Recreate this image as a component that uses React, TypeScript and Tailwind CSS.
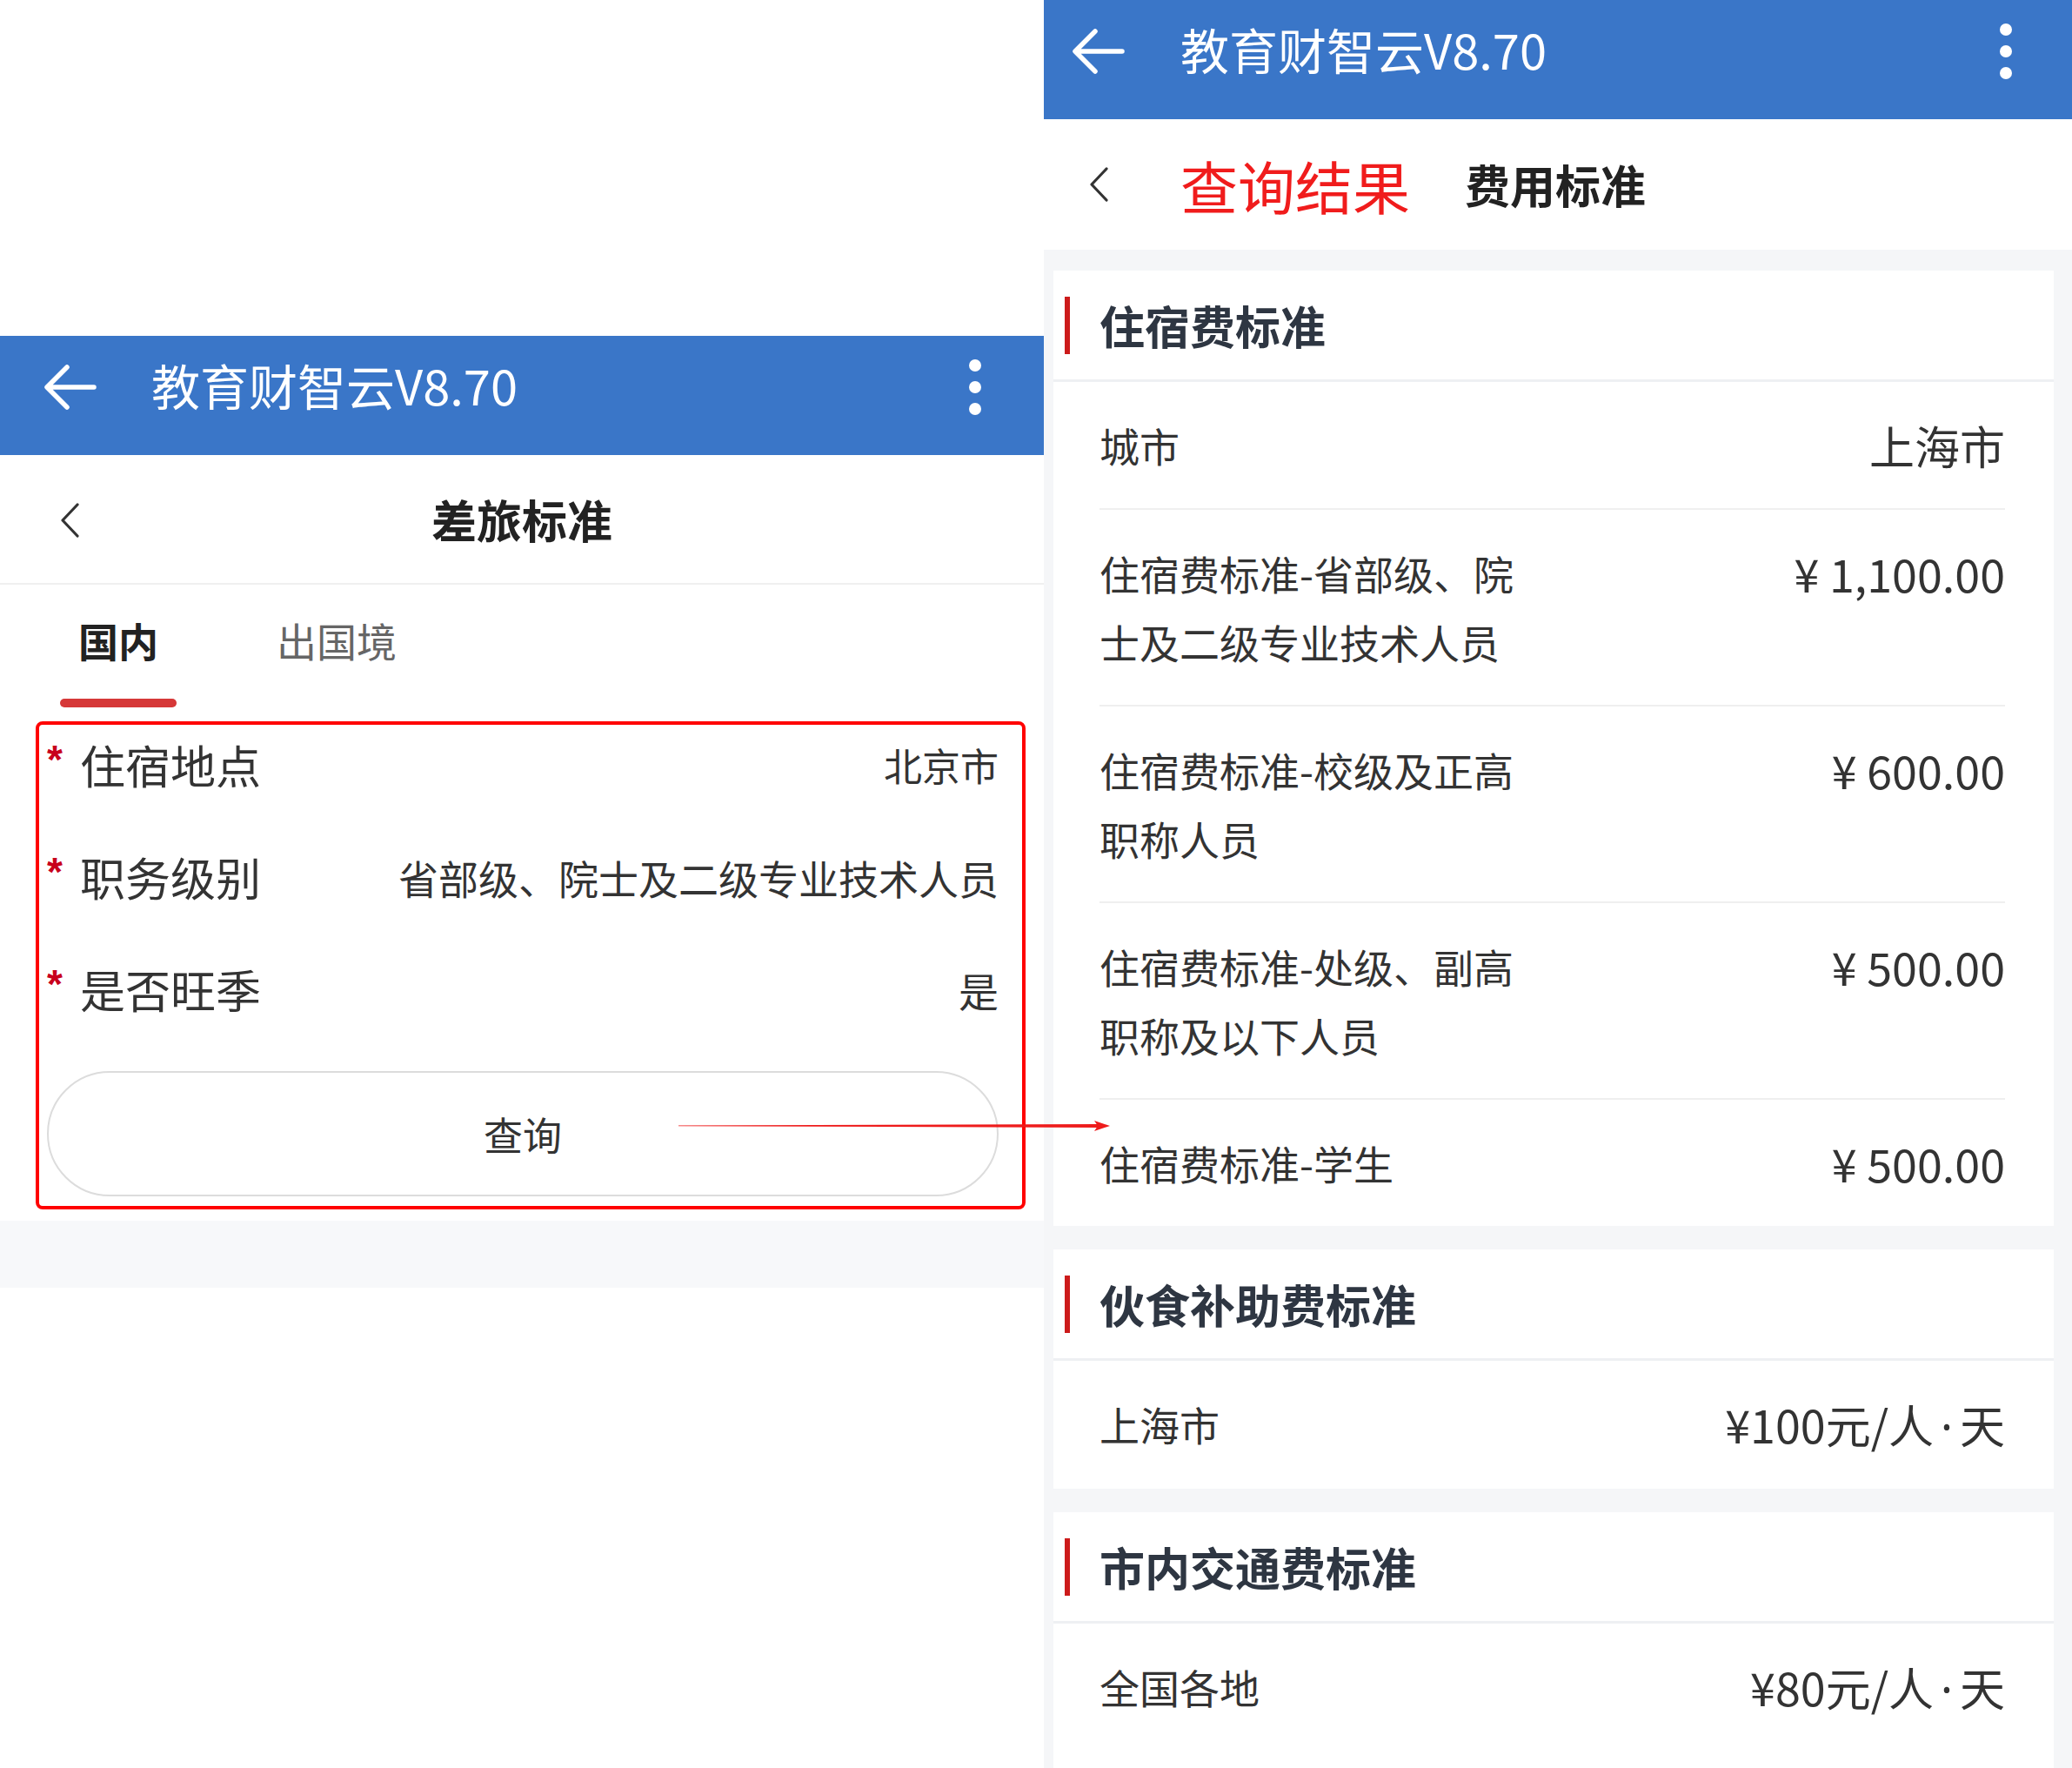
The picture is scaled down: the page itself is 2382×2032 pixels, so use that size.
import React from "react";

function BackArrow() {
  return (
    <svg width="61" height="52" viewBox="0 0 61 52" fill="none">
      <path
        d="M58 26H5M27 3L4 26L27 49"
        stroke="white"
        strokeWidth="5.5"
        strokeLinecap="round"
        strokeLinejoin="round"
      />
    </svg>
  );
}

function Dots() {
  return (
    <div className="flex flex-col items-center gap-[11px]">
      <span className="w-[14px] h-[14px] rounded-full bg-white" />
      <span className="w-[14px] h-[14px] rounded-full bg-white" />
      <span className="w-[14px] h-[14px] rounded-full bg-white" />
    </div>
  );
}

function Chevron() {
  return (
    <svg width="24" height="40" viewBox="0 0 24 40" fill="none">
      <path
        d="M21 2L4 20L21 38"
        stroke="#333"
        strokeWidth="3.2"
        strokeLinecap="round"
        strokeLinejoin="round"
      />
    </svg>
  );
}

function AppBar({ arrowPad, titlePad, dotsPad }: { arrowPad: string; titlePad: string; dotsPad: string }) {
  return (
    <div className="h-[137px] bg-[#3a76c8] flex items-center pb-[20px]">
      <div className={arrowPad}>
        <BackArrow />
      </div>
      <span className={"text-[56px] text-white leading-none -mt-[6px] " + titlePad}>
        教育财智云V8.70
      </span>
      <div className={"ml-auto " + dotsPad}>
        <Dots />
      </div>
    </div>
  );
}

function FormRow({ label, value, valueSize }: { label: string; value: string; valueSize: string }) {
  return (
    <div className="h-[70px] flex items-center justify-between">
      <div className="flex items-center">
        <span className="w-[38px] text-[46px] font-bold leading-none text-[#c8001c] -mt-[12px] font-['Liberation_Sans',sans-serif]">
          *
        </span>
        <span className="text-[52px] leading-none text-[#333]">{label}</span>
      </div>
      <span className={"leading-none text-[#333] " + valueSize}>{value}</span>
    </div>
  );
}

interface Item {
  label: string;
  value: React.ReactNode;
}

function Card({ title, items, grow }: { title: string; items: Item[]; grow?: boolean }) {
  return (
    <div className={"bg-white ml-[11px] mr-[21px] " + (grow ? "flex-1" : "")}>
      <div className="h-[128px] flex items-center border-b-[3px] border-[#eef0f3]">
        <span className="ml-[13px] w-[6px] h-[66px] bg-[#cc1b1b]" />
        <span className="ml-[34px] text-[52px] font-bold leading-none text-[#2e3642]">
          {title}
        </span>
      </div>
      <div className="ml-[53px] mr-[56px]">
        {items.map((it, i) => (
          <div
            key={i}
            className={
              "flex justify-between items-start py-[33px] " +
              (i > 0 ? "border-t-2 border-[#efefef]" : "")
            }
          >
            <span className="max-w-[500px] text-[46px] leading-[79px] text-[#333]">
              {it.label}
            </span>
            <span className="text-[52px] leading-[79px] text-[#333] whitespace-nowrap">
              {it.value}
            </span>
          </div>
        ))}
      </div>
    </div>
  );
}

function PerDay({ amount }: { amount: string }) {
  return (
    <>
      ¥{amount}元/人
      <span className="font-['Noto_Sans',sans-serif] mx-[8px]">·</span>天
    </>
  );
}

export default function App() {
  const lodging: Item[] = [
    { label: "城市", value: "上海市" },
    { label: "住宿费标准-省部级、院士及二级专业技术人员", value: "¥ 1,100.00" },
    { label: "住宿费标准-校级及正高职称人员", value: "¥ 600.00" },
    { label: "住宿费标准-处级、副高职称及以下人员", value: "¥ 500.00" },
    { label: "住宿费标准-学生", value: "¥ 500.00" },
  ];

  return (
    <div className="relative w-[2382px] h-[2032px] flex overflow-hidden bg-white font-['Noto_Sans_CJK_SC','Noto_Sans',sans-serif]">
      {/* left phone: query form */}
      <div className="w-[1200px] shrink-0 flex flex-col bg-white">
        <div className="h-[386px]" />
        <AppBar arrowPad="ml-[50px]" titlePad="ml-[63px]" dotsPad="mr-[72px]" />
        <div className="h-[149px] border-b-2 border-[#f0f0f0] relative flex items-center justify-center">
          <div className="absolute left-[68px] top-[55px]">
            <Chevron />
          </div>
          <span className="text-[52px] font-bold leading-none text-[#222]">差旅标准</span>
        </div>

        <div className="pt-[32px] pl-[69px] flex gap-[115px]">
          <div className="flex flex-col items-center w-[134px]">
            <span className="text-[46px] leading-[62px] font-bold text-[#222]">国内</span>
            <span className="mt-[37px] w-[134px] h-[10px] rounded-full bg-[#d63838]" />
          </div>
          <div className="flex flex-col items-center">
            <span className="text-[46px] leading-[62px] text-[#666]">出国境</span>
          </div>
        </div>

        <div className="mt-[16px] ml-[41px] mr-[21px] border-4 border-[#ff0000] rounded-[8px] pt-[11px] pb-[11px] pl-[9px] pr-[27px] flex flex-col gap-[59px]">
          <FormRow label="住宿地点" value="北京市" valueSize="text-[44px]" />
          <FormRow label="职务级别" value="省部级、院士及二级专业技术人员" valueSize="text-[46px]" />
          <FormRow label="是否旺季" value="是" valueSize="text-[46px]" />
          <div className="h-[144px] rounded-full border-2 border-[#dcdcdc] flex items-center justify-center">
            <span className="text-[45px] leading-none text-[#333]">查询</span>
          </div>
        </div>

        <div className="mt-[13px] h-[77px] bg-[#f7f8fa]" />
      </div>

      {/* right phone: results */}
      <div className="flex-1 flex flex-col bg-[#f5f6f8]">
        <AppBar arrowPad="ml-[32px]" titlePad="ml-[64px]" dotsPad="mr-[69px]" />
        <div className="h-[150px] bg-white flex items-center">
          <div className="ml-[51px]">
            <Chevron />
          </div>
          <span className="ml-[82px] text-[66px] leading-none text-[#f01c1c]">查询结果</span>
          <span className="ml-[63px] text-[52px] font-bold leading-none text-[#222]">费用标准</span>
        </div>

        <div className="flex-1 pt-[24px] flex flex-col gap-[27px]">
          <Card title="住宿费标准" items={lodging} />
          <Card title="伙食补助费标准" items={[{ label: "上海市", value: <PerDay amount="100" /> }]} />
          <Card title="市内交通费标准" items={[{ label: "全国各地", value: <PerDay amount="80" /> }]} grow />
        </div>
      </div>

      {/* annotation arrow from the query button to the results */}
      <svg
        className="absolute left-[780px] top-[1283px]"
        width="500"
        height="22"
        viewBox="0 0 500 22"
      >
        <polygon points="0,10.6 482,9 482,13 0,11.2" fill="#ee1c1c" />
        <polygon points="478,5 496,11 478,17 482,11" fill="#ee1c1c" />
      </svg>
    </div>
  );
}
